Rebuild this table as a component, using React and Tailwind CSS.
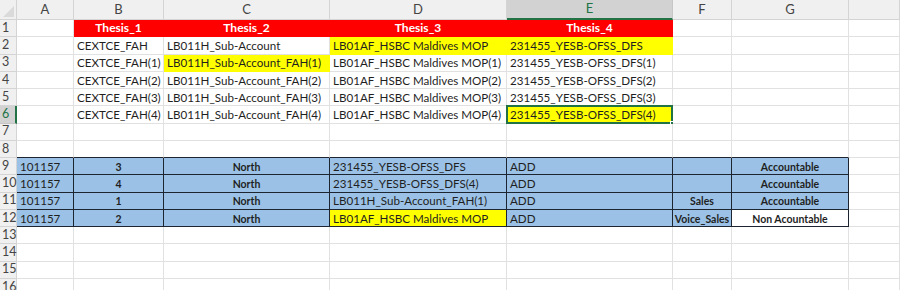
import React from 'react';

const COLS = ['A', 'B', 'C', 'D', 'E', 'F', 'G', ''];
const TH = ['Thesis_1', 'Thesis_2', 'Thesis_3', 'Thesis_4'];

// cell helpers
const t = (text, extra = {}) => ({ text, ...extra });
const head = (text) => ({ text, kind: 'head' });
const blue = (text = '', extra = {}) => ({ text, kind: 'blue', ...extra });

const buildRows = () => {
  const rows = [];
  rows.push([t(''), ...TH.map(head), t(''), t(''), t('')]);
  const sfx = ['', '(1)', '(2)', '(3)', '(4)'];
  sfx.forEach((s, i) => {
    rows.push([
      t(''),
      t('CEXTCE_FAH' + s),
      t((i === 0 ? 'LB011H_Sub-Account' : 'LB011H_Sub-Account_FAH') + s, { yellow: i === 1 }),
      t('LB01AF_HSBC Maldives MOP' + s, { yellow: i === 0 }),
      t('231455_YESB-OFSS_DFS' + s, { yellow: i === 0 || i === 4, selected: i === 4 }),
      t(''),
      t(''),
      t(''),
    ]);
  });
  rows.push(Array.from({ length: 8 }, () => t('')));
  rows.push(Array.from({ length: 8 }, (_, c) => t('', { topDark: c < 7 })));
  const table = [
    ['3', '231455_YESB-OFSS_DFS', '', 'Accountable'],
    ['4', '231455_YESB-OFSS_DFS(4)', '', 'Accountable'],
    ['1', 'LB011H_Sub-Account_FAH(1)', 'Sales', 'Accountable'],
    ['2', 'LB01AF_HSBC Maldives MOP', 'Voice_Sales', 'Non Acountable'],
  ];
  table.forEach(([n, d, f, g], i) => {
    rows.push([
      blue('101157'),
      blue(n, { bold: true }),
      blue('North', { bold: true }),
      blue(d, { yellow: i === 3 }),
      blue('ADD'),
      blue(f, { bold: true }),
      blue(g, { bold: true, white: i === 3 }),
      t(''),
    ]);
  });
  for (let i = 0; i < 4; i++) rows.push(Array.from({ length: 8 }, () => t('')));
  return rows;
};

const ROWS = buildRows();

const Cell = ({ cell }) => {
  let bg = 'bg-white';
  let border = 'border-r border-b border-[#e1e1e1]';
  let text = 'text-[11.6px] text-[#1f1f1f] justify-start pl-[3px] pt-px';

  if (cell.kind === 'head') {
    bg = 'bg-[#ff0000]';
    border = 'border-r border-b border-[#ff0000]';
    text = 'text-[12px] font-bold text-white justify-center';
  }
  if (cell.kind === 'blue') {
    bg = cell.yellow ? 'bg-[#ffff00]' : cell.white ? 'bg-white' : 'bg-[#9bc2e6]';
    border = 'border-r border-b border-[#1c2530]';
    text = cell.bold
      ? 'text-[10.5px] font-bold text-[#1f1f1f] justify-center pt-[2px]'
      : 'text-[11.6px] text-[#1f1f1f] justify-start pl-[3px] pt-px';
  } else if (cell.yellow) {
    bg = 'bg-[#ffff00]';
    border = 'border-r border-b border-[#ffff00]';
  }
  if (cell.topDark) border = 'border-r border-b border-r-[#e1e1e1] border-b-[#1c2530]';

  return (
    <div className={`relative flex items-center whitespace-nowrap leading-none ${bg} ${border} ${text}`}>
      {cell.text}
      {cell.selected && (
        <>
          <div className="absolute -left-px -top-px -right-px -bottom-px border-2 border-[#217346]" />
          <div className="absolute -right-[4px] -bottom-[4px] w-[6px] h-[6px] bg-[#217346] border border-white" />
        </>
      )}
    </div>
  );
};

export default function App() {
  return (
    <div className="w-[900px] h-[290px] overflow-hidden bg-white font-['Lato',sans-serif]">
      <div className="grid grid-cols-[17px_57px_90px_166px_177px_166px_59px_117px_1fr] grid-rows-[20px_repeat(16,17.25px)]">
        {/* corner */}
        <div className="relative bg-[#f0f0f0] border-r border-b border-[#d4d4d4]">
          <svg className="absolute right-[2px] bottom-[2px]" width="11" height="11" viewBox="0 0 11 11">
            <polygon points="11,0 11,11 0,11" fill="#dadada" />
          </svg>
        </div>
        {/* column letters */}
        {COLS.map((c, i) => (
          <div
            key={'h' + i}
            className={
              c === 'E'
                ? 'flex items-center justify-center text-[13px] text-[#217346] bg-[#d2d2d2] border-r border-[#c6c6c6] border-b-2 border-b-[#217346]'
                : 'flex items-center justify-center text-[13px] text-[#444] bg-[#f0f0f0] border-r border-b border-[#d4d4d4]'
            }
          >
            {c}
          </div>
        ))}
        {ROWS.map((row, r) => (
          <React.Fragment key={r}>
            <div
              className={
                r === 5
                  ? 'flex items-center justify-start pl-[2px] text-[12.5px] text-[#217346] bg-[#d2d2d2] border-b border-[#c6c6c6] border-r-2 border-r-[#217346]'
                  : 'flex items-center justify-start pl-[2px] text-[12.5px] text-[#444] bg-[#f0f0f0] border-r border-b border-[#d4d4d4]'
              }
            >
              {r + 1}
            </div>
            {row.map((cell, c) => (
              <Cell key={c} cell={cell} />
            ))}
          </React.Fragment>
        ))}
      </div>
    </div>
  );
}
